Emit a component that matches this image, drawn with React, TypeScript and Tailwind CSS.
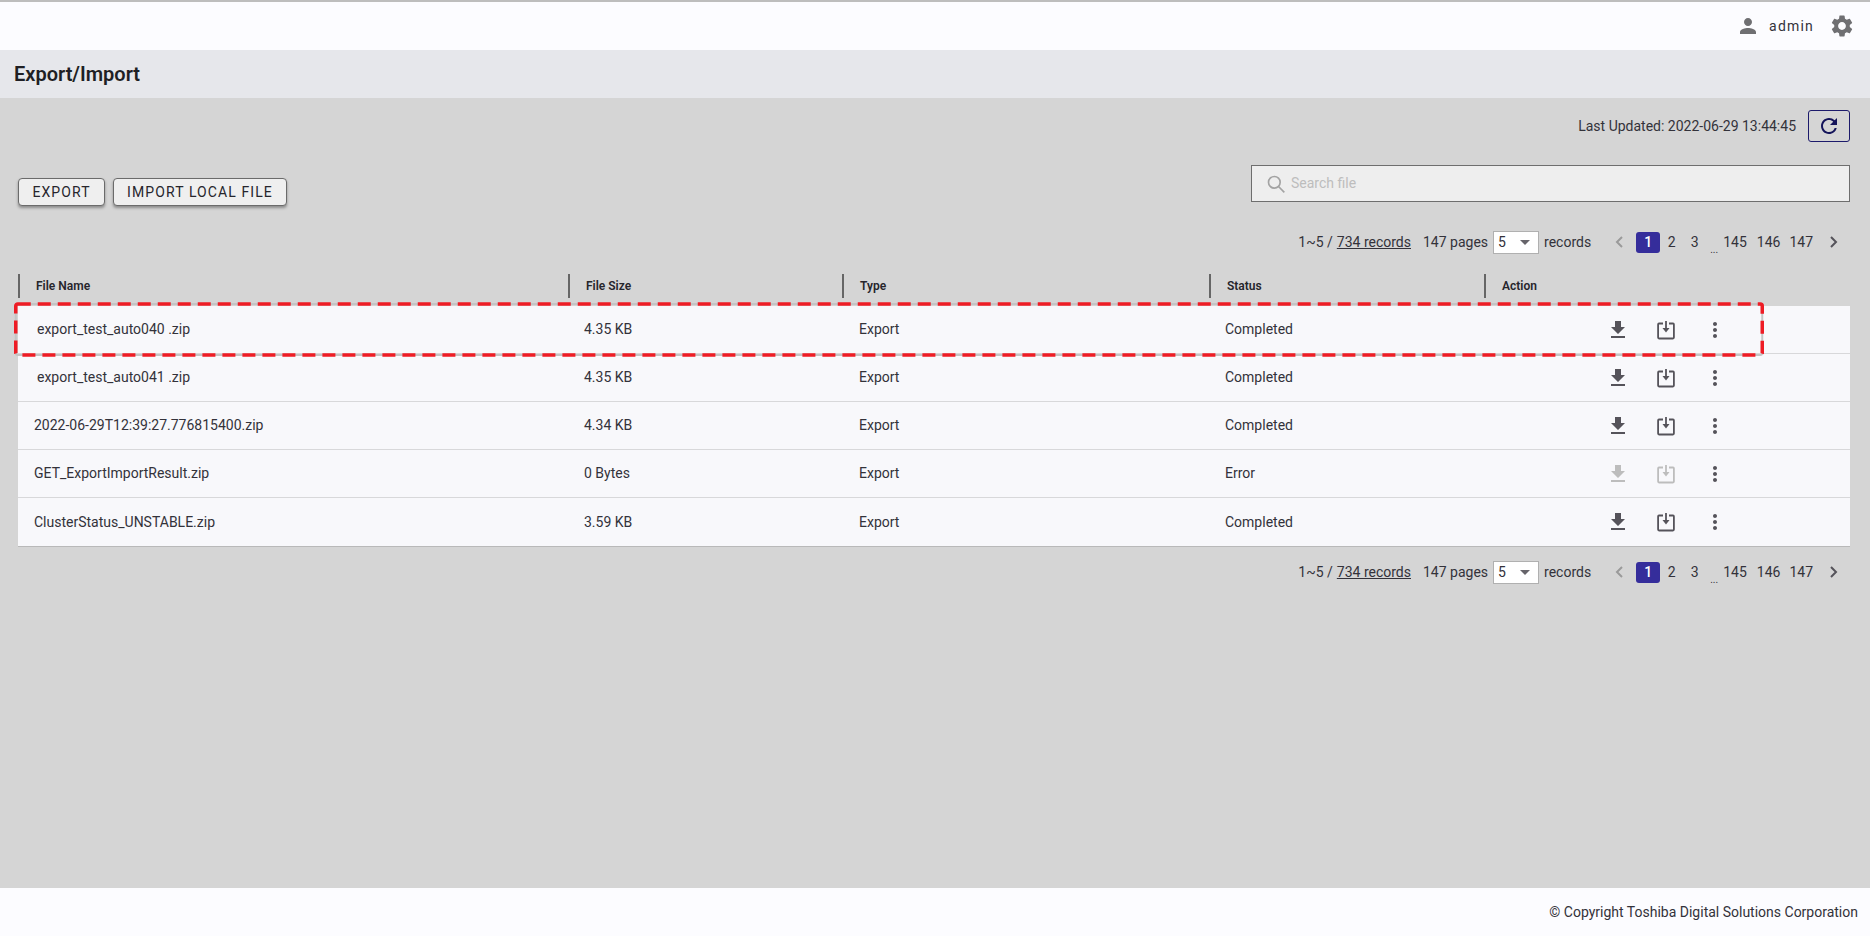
import React from "react";

const ink = "#55535a";

function GetApp({ dim }: { dim?: boolean }) {
  return (
    <svg width="24" height="24" viewBox="0 0 24 24" fill={dim ? "#bdbdbd" : ink}>
      <path d="M19 9h-4V3H9v6H5l7 7 7-7zM5 18v2h14v-2H5z" />
    </svg>
  );
}

function SaveBox({ dim }: { dim?: boolean }) {
  const c = dim ? "#bdbdbd" : ink;
  return (
    <svg width="24" height="24" viewBox="0 0 24 24" fill="none">
      <path d="M9 5.500H5a.9.9 0 0 0-.9.9v13.200a.9.9 0 0 0 .9.9h14a.9.9 0 0 0 .9-.9V6.400a.9.9 0 0 0-.9-.9h-4" stroke={c} strokeWidth="1.800" />
      <path d="M12 3v8" stroke={c} strokeWidth="1.800" />
      <path d="M8.500 10h7L12 14.500z" fill={c} />
    </svg>
  );
}

function MoreV() {
  return (
    <svg width="24" height="24" viewBox="0 0 24 24" fill={ink}>
      <path d="M12 8c1.100 0 2-.9 2-2s-.9-2-2-2-2 .9-2 2 .9 2 2 2zm0 2c-1.100 0-2 .9-2 2s.9 2 2 2 2-.9 2-2-.9-2-2-2zm0 6c-1.100 0-2 .9-2 2s.9 2 2 2 2-.9 2-2-.9-2-2-2z" />
    </svg>
  );
}

function Pager() {
  return (
    <div className="flex h-[24px] items-center justify-end pr-[8px] text-[14px] text-[#33323a]">
      <span>1~5 / </span>
      <span className="ml-[4px] underline">734 records</span>
      <span className="ml-[12px]">147 pages</span>
      <div className="ml-[5px] flex h-[23px] w-[46px] items-center justify-between border border-[#b0b0b0] bg-white pl-[4px] pr-[8px]">
        <span>5</span>
        <span className="h-0 w-0 border-x-[5px] border-t-[5px] border-x-transparent border-t-[#66646a]" />
      </div>
      <span className="ml-[5px]">records</span>
      <svg className="ml-[20px]" width="16" height="24" viewBox="0 0 16 24" fill="none" stroke="#9a9a9a" strokeWidth="2">
        <path d="M11 7 6 12l5 5" />
      </svg>
      <span className="ml-[9px] flex h-[21px] w-[24px] items-center justify-center rounded-[3px] bg-[#352d9b] font-medium text-white">1</span>
      <span className="flex w-[23px] justify-center">2</span>
      <span className="flex w-[23px] justify-center">3</span>
      <span className="mt-[16px] w-[16px] text-center text-[10px] leading-none">...</span>
      <span className="ml-[1px]">145</span>
      <span className="ml-[10px]">146</span>
      <span className="ml-[9px]">147</span>
      <svg className="ml-[13px]" width="16" height="24" viewBox="0 0 16 24" fill="none" stroke="#55535a" strokeWidth="2">
        <path d="M5 7l5 5-5 5" />
      </svg>
    </div>
  );
}

const rows = [
  { name: "export_test_auto040 .zip", size: "4.35 KB", status: "Completed", pad: "pl-[19px]", dim: false },
  { name: "export_test_auto041 .zip", size: "4.35 KB", status: "Completed", pad: "pl-[19px]", dim: false },
  { name: "2022-06-29T12:39:27.776815400.zip", size: "4.34 KB", status: "Completed", pad: "pl-[16px]", dim: false },
  { name: "GET_ExportImportResult.zip", size: "0 Bytes", status: "Error", pad: "pl-[16px]", dim: true },
  { name: "ClusterStatus_UNSTABLE.zip", size: "3.59 KB", status: "Completed", pad: "pl-[16px]", dim: false },
];

const headers = [
  { t: "File Name", w: "w-[550px]" },
  { t: "File Size", w: "w-[274px]" },
  { t: "Type", w: "w-[367px]" },
  { t: "Status", w: "w-[275px]" },
  { t: "Action", w: "flex-1" },
];

export default function App() {
  return (
    <div className="flex h-[936px] flex-col overflow-hidden bg-[#d5d5d5] font-['Roboto',sans-serif] text-[#33323a]">
      <header className="flex h-[50px] shrink-0 items-center justify-end border-t-2 border-[#bdbdbd] bg-[#fcfcff] pr-[15px]">
        <svg width="24" height="24" viewBox="0 0 24 24" fill="#6f6f72">
          <path d="M12 12c2.210 0 4-1.790 4-4s-1.790-4-4-4-4 1.790-4 4 1.790 4 4 4zm0 2c-2.670 0-8 1.340-8 4v2h16v-2c0-2.660-5.330-4-8-4z" />
        </svg>
        <span className="ml-[9px] text-[14px] tracking-[1.2px] text-[#33323a]">admin</span>
        <svg className="ml-[15px]" width="26" height="26" viewBox="0 0 24 24" fill="#6f6f72">
          <path d="M19.140 12.940c.04-.3.06-.61.06-.94 0-.32-.02-.64-.07-.94l2.030-1.580a.49.49 0 0 0 .12-.61l-1.920-3.320a.488.488 0 0 0-.59-.22l-2.390.96c-.5-.38-1.030-.7-1.620-.94l-.36-2.540a.484.484 0 0 0-.48-.41h-3.840c-.24 0-.43.17-.47.41l-.36 2.540c-.59.24-1.130.57-1.620.94l-2.390-.96c-.22-.08-.47 0-.59.22L2.740 8.870c-.12.21-.08.47.12.61l2.030 1.580c-.05.3-.09.63-.09.94s.02.64.07.94l-2.030 1.580a.49.49 0 0 0-.12.61l1.920 3.320c.12.22.37.29.59.22l2.390-.96c.5.38 1.030.7 1.620.94l.36 2.540c.05.24.24.41.48.41h3.840c.24 0 .44-.17.47-.41l.36-2.540c.59-.24 1.130-.56 1.620-.94l2.390.96c.22.08.47 0 .59-.22l1.920-3.320c.12-.22.07-.47-.12-.61l-2.010-1.580zM12 15.600c-1.980 0-3.600-1.620-3.600-3.600s1.620-3.600 3.600-3.600 3.600 1.620 3.600 3.600-1.620 3.600-3.600 3.600z" />
        </svg>
      </header>

      <div className="flex h-[48px] shrink-0 items-center bg-[#e6e7eb] pl-[14px]">
        <h1 className="text-[20px] font-semibold text-[#1f1f24]">Export/Import</h1>
      </div>

      <main className="relative flex-1 pl-[18px] pr-[20px]">
        <div className="flex h-[44px] items-end justify-end">
          <span className="mb-[5px] mr-[12px] text-[14px]">Last Updated: 2022-06-29 13:44:45</span>
          <button className="flex h-[32px] w-[42px] items-center justify-center rounded-[3px] border border-[#1c1a6b]">
            <svg width="24" height="24" viewBox="0 0 24 24" fill="#14145a">
              <path d="M17.650 6.350A7.958 7.958 0 0 0 12 4c-4.420 0-7.990 3.580-7.990 8s3.570 8 7.990 8c3.730 0 6.840-2.550 7.730-6h-2.080A5.990 5.990 0 0 1 12 18c-3.310 0-6-2.690-6-6s2.690-6 6-6c1.660 0 3.140.69 4.220 1.780L13 11h7V4l-2.350 2.350z" />
            </svg>
          </button>
        </div>

        <div className="mt-[23px] flex items-start justify-between">
          <div className="mt-[13px] flex gap-[8px]">
            <button className="h-[28px] w-[87px] rounded-[4px] border border-[#6b6b6b] bg-[#efefef] pt-[1px] text-[14px] tracking-[1.1px] text-[#26252c] shadow-[0_2px_3px_rgba(0,0,0,0.35)]">EXPORT</button>
            <button className="h-[28px] w-[174px] rounded-[4px] border border-[#6b6b6b] bg-[#efefef] pt-[1px] text-[14px] tracking-[1.1px] text-[#26252c] shadow-[0_2px_3px_rgba(0,0,0,0.35)]">IMPORT LOCAL FILE</button>
          </div>
          <div className="flex h-[37px] w-[599px] items-center border border-[#6e6e6e] bg-[#eeeeee] pl-[14px]">
            <svg width="20" height="20" viewBox="0 0 24 24" fill="none" stroke="#a3a3a3" strokeWidth="2">
              <circle cx="10" cy="10" r="7" />
              <path d="m15 15 7 7" />
            </svg>
            <span className="ml-[5px] text-[14px] text-[#bdbdbd]">Search file</span>
          </div>
        </div>

        <div className="mt-[24px]">
          <Pager />
        </div>

        <div className="mt-[20px] flex h-[24px] items-center text-[12px] font-semibold text-[#26252c]">
          {headers.map((h) => (
            <div key={h.t} className={`${h.w} h-full border-l-2 border-[#666666] pl-[16px] leading-[24px]`}>
              {h.t}
            </div>
          ))}
        </div>

        <div className="mt-[8px] border-b border-[#b9b9b9] bg-[#f8f8fb] text-[14px] text-[#33323a]">
          {rows.map((r, i) => (
            <div key={r.name} className={`flex h-[48px] items-center ${i < 4 ? "border-b border-[#d8d8da]" : ""}`}>
              <div className={`w-[566px] ${r.pad}`}>{r.name}</div>
              <div className="w-[275px]">{r.size}</div>
              <div className="w-[366px]">Export</div>
              <div className="w-[381px]">{r.status}</div>
              <div className="flex items-center">
                <GetApp dim={r.dim} />
                <span className="ml-[24px]"><SaveBox dim={r.dim} /></span>
                <span className="ml-[25px]"><MoreV /></span>
              </div>
            </div>
          ))}
        </div>

        <div className="mt-[13px]">
          <Pager />
        </div>

        <svg className="absolute left-[14px] top-[204px]" width="1750" height="55" fill="none">
          <rect x="1.750" y="2" width="1746.500" height="51" rx="2" stroke="#c4c4c4" strokeWidth="2" />
          <rect x="1.750" y="2" width="1746.500" height="51" rx="2" stroke="#ee1c25" strokeWidth="3.500" strokeDasharray="13 7" />
        </svg>
      </main>

      <footer className="flex h-[48px] shrink-0 items-center justify-end bg-[#fcfcff] pr-[12px] text-[14px] text-[#33323a]">
        © Copyright Toshiba Digital Solutions Corporation
      </footer>
    </div>
  );
}
